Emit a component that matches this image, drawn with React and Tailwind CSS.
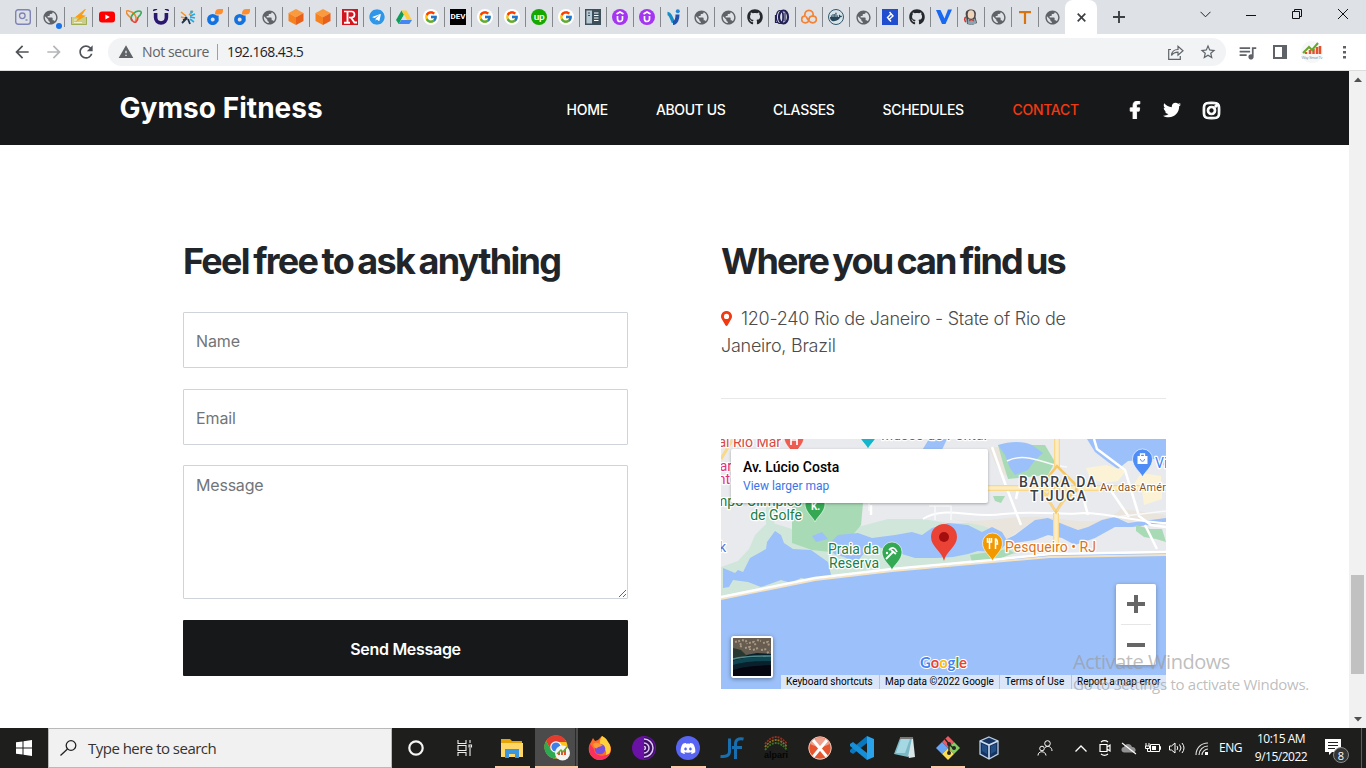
import React from "react";
import { FcGoogle } from "react-icons/fc";
import { FaGithub, FaTelegram, FaFacebookF, FaTwitter, FaInstagram, FaDocker, FaDiscord } from "react-icons/fa";
import { MdPublic, MdArrowBack, MdArrowForward, MdRefresh, MdWarning, MdStarBorder, MdQueueMusic } from "react-icons/md";

const Globe = () => <MdPublic className="h-[17px] w-[17px] text-[#5f6368]" />;
const GoogleTab = () => (
  <span className="flex h-4 w-4 items-center justify-center rounded-full bg-white">
    <FcGoogle className="h-[14px] w-[14px]" />
  </span>
);
const Svg = ({ children, className = "h-4 w-4", box = "0 0 16 16" }) => (
  <svg viewBox={box} className={className} fill="none">{children}</svg>
);
const Finder = () => (
  <Svg>
    <rect x=".7" y=".7" width="14.6" height="14.6" rx="2.5" stroke="#7e84b5" strokeWidth="1.4" />
    <circle cx="7.3" cy="6.8" r="2.8" stroke="#7e84b5" strokeWidth="1.3" />
    <path d="M10.5 11h2" stroke="#7e84b5" strokeWidth="1.4" />
  </Svg>
);
const GlobeDot = () => (
  <span className="relative flex">
    <Globe />
    <span className="absolute -right-[3px] -bottom-[3px] h-[6px] w-[6px] rounded-full bg-[#1a73e8]" />
  </span>
);
const Bolt = () => (
  <Svg>
    <path d="M0 8h16v8H0z" fill="#c9cf8a" />
    <path d="M.5 8v7.500h15V8" stroke="#9fae55" />
    <path d="M3 11h3M3 13.500h8" stroke="#eef0d0" />
    <path d="M14 0 4 8.300l4 .5-4 4.700 11-6.800-4-.7 4-6z" fill="#fb9d0c" />
  </Svg>
);
const Youtube = () => (
  <Svg>
    <rect x="0" y="2.5" width="16" height="11" rx="3" fill="red" />
    <path d="m6.4 5.5 4.4 2.5-4.4 2.5z" fill="#fff" />
  </Svg>
);
const Loop = () => (
  <Svg>
    <path d="M5 9C-1 4-1 1 3 2c5 1 9 6 6 11" stroke="#f18a2b" strokeWidth="1.6" />
    <path d="M6 12c-3-5 3-10 7-10 4 0 2 4-1 6" stroke="#3cab57" strokeWidth="1.6" />
    <path d="M5 9c1 3 3 5 5 4 2-2 2-4 2-5" stroke="#e6403a" strokeWidth="1.6" />
  </Svg>
);
const UMark = () => (
  <Svg>
    <path d="M2.600 4v4.600a5.400 5.400 0 0 0 10.800 0V4" stroke="#2b1670" strokeWidth="3.600" />
    <path d="M0 1.500 4 0M12 0l4 1.500" stroke="#2b1670" strokeWidth="1.600" />
  </Svg>
);
const People = () => (
  <Svg>
    <path d="m1 3 5 4M1 8l4 1M9 6l4-4" stroke="#f7901e" strokeWidth="1.600" />
    <path d="m10 7 5-2M10 8l5 1M10 10l4 3" stroke="#27a9e1" strokeWidth="1.700" />
    <path d="m7 9-5 5M8 10l2 5M6 10l-3 1" stroke="#24324a" strokeWidth="1.800" />
    <circle cx="11.500" cy="3" r="1.400" fill="#27a9e1" /><circle cx="6" cy="9" r="1.500" fill="#24324a" />
  </Svg>
);
const DMark = () => (
  <Svg>
    <circle cx="5.700" cy="10.500" r="3.800" stroke="#1372e0" strokeWidth="3.600" />
    <path d="M8 5.500V4.400c0-3 1.800-4.400 4-4.400h4v1.500c0 3-1.600 4-4 4z" fill="#ff8d2e" />
    <path d="M10.500 6.500v6" stroke="#1372e0" strokeWidth="2.200" />
  </Svg>
);
const Cube = () => (
  <Svg>
    <path d="m8 0 7.500 4L8 8.300.500 4z" fill="#fa9a3e" />
    <path d="M.500 4 8 8.300V16L.500 12z" fill="#f6821f" />
    <path d="M15.500 4 8 8.300V16l7.500-4z" fill="#e8611a" />
  </Svg>
);
const RMark = () => (
  <Svg>
    <path d="M0 0h16v16H0z" fill="#d2151e" />
    <path d="M2 2.500h7.500a3 3 0 0 1 0 6H7" stroke="#fff" strokeWidth="1.700" />
    <path d="M5.500 2v12M2 13.700h6M9 8.500l3.500 5H15" stroke="#fff" strokeWidth="1.900" />
  </Svg>
);
const Drive = () => (
  <Svg>
    <path d="M5.500 1.500 0 11l2.700 4L8 5.500z" fill="#0f9d58" />
    <path d="M5.500 1.500h5L16 11h-5.200z" fill="#ffcd40" />
    <path d="m2.700 15 2.600-4H16l-2.700 4z" fill="#4285f4" />
    <path d="m8 6 2.800 5H5.300z" fill="#dee1e6" />
  </Svg>
);
const Dev = () => (
  <span className="flex h-4 w-4 items-center justify-center bg-black font-['Roboto',sans-serif] text-[8px] leading-none font-bold text-white">DEV</span>
);
const Up = () => (
  <span className="flex h-4 w-4 items-center justify-center rounded-full bg-[#14a800] pb-[2px] font-['Lato',sans-serif] text-[10px] leading-none font-bold tracking-[-0.500px] text-white">up</span>
);
const Book = () => (
  <Svg>
    <path d="M.7.700h14.600v14.600H.7z" fill="#b7c9d3" stroke="#3d4f5a" strokeWidth="1.400" />
    <path d="M7 1h8v14H7z" fill="#3d4f5a" />
    <path d="M9 4h4.500M9 6.500h4.500M9 9h4.500M9 11.500h4.500" stroke="#fff" strokeWidth="1.200" />
    <path d="M3 4h2M3 6.500h2" stroke="#3d4f5a" />
  </Svg>
);
const Udemy = () => (
  <Svg>
    <circle cx="8" cy="8" r="8" fill="#a435f0" />
    <path d="m4.500 5 3.500-2 3.500 2M5.500 7v3a2.500 2.500 0 0 0 5 0V7" stroke="#fff" strokeWidth="1.700" />
  </Svg>
);
const ViMark = () => (
  <Svg>
    <path d="M1.500 4.500c3 0 3.500 4 6 9" stroke="#168ec7" strokeWidth="3.400" />
    <path d="M7 14c3 0 4.500-4 4.500-8.500" stroke="#2150ad" strokeWidth="4" />
    <circle cx="11.800" cy="2.300" r="2" fill="#2586d3" />
  </Svg>
);
const Eclipse = () => (
  <Svg>
    <ellipse cx="9.500" cy="8" rx="4.500" ry="6.500" stroke="#211f55" strokeWidth="2.200" />
    <ellipse cx="5.800" cy="8" rx="3.500" ry="6.500" stroke="#211f55" strokeWidth="1.200" />
    <path d="M9 3.500v9M11 3.500v9M1.500 6v7.500H4" stroke="#211f55" strokeWidth="1.200" />
  </Svg>
);
const CloudTri = () => (
  <Svg>
    <path d="M8 10.500c0 2-1.500 3.300-3.700 3.300a3.500 3.500 0 0 1-.3-7C2.500-.500 13.500-.500 12 6.800a3.500 3.500 0 0 1-.3 7c-2 0-3.200-1-4.700-3L5 7.500M8 10.500c0-2 1.500-3.500 4-3.700" stroke="#f58233" strokeWidth="1.700" />
  </Svg>
);
const DockerTab = () => (
  <span className="flex h-4 w-4 items-center justify-center rounded-full border border-[#33576c] bg-[#d7e4ea]">
    <FaDocker className="h-[12px] w-[12px] text-[#27475a]" />
  </span>
);
const Blue = () => (
  <Svg>
    <path d="M0 0h16v16H0z" fill="#204ecf" />
    <path d="m7.500 3 3.500 4-4.500 4M9 5 5.500 8.500 9 12.500" stroke="#fff" strokeWidth="1.400" />
  </Svg>
);
const VMark = () => (
  <Svg><path d="M0 1h4.500l4 8.500L12 .500h4L9.500 15H6z" fill="#1868f2" /></Svg>
);
const Jenkins = () => (
  <Svg>
    <path d="M3 7C1.500 2 5 0 8.500.500 13 1 13.500 4 12.500 8l1.500 6-5 2-5-1z" fill="#4a4443" />
    <ellipse cx="8" cy="5.500" rx="3.300" ry="4.300" fill="#eed3bd" />
    <path d="M5 9.500 8 11l4-1.500 1.500 5-5 1.500-4-1.500z" fill="#8aa4b3" />
    <path d="m6 10 2 1.300L11 10v2.500L8.500 11.300 6 12.500z" fill="#d33833" />
    <path d="M3 8c-2 1-1.500 4 0 5" stroke="#d33833" strokeWidth="1.600" />
  </Svg>
);
const TMark = () => (
  <Svg><path d="M2 3.200h12M8 3v12" stroke="#d9730d" strokeWidth="2.200" /></Svg>
);
const Telegram = () => (
  <span className="flex h-4 w-4 rounded-full bg-white"><FaTelegram className="h-4 w-4 text-[#2f96e8]" /></span>
);
const Hub = () => <FaGithub className="h-4 w-4 text-[#24292e]" />;

const LEADING_TABS = [Finder, GlobeDot, Bolt, Youtube];
const TABS = [Loop, UMark, People, DMark, DMark, Globe, Cube, Cube, RMark, Telegram, Drive, GoogleTab, Dev, GoogleTab, GoogleTab, Up, GoogleTab, Book, Udemy, Udemy, ViMark, Globe, Globe, Hub, Eclipse, CloudTri, DockerTab, Globe, Blue, Hub, VMark, Jenkins, Globe, TMark];

function TabStrip() {
  return (
    <div className="flex h-[34px] bg-[#dee1e6] pl-[9px] text-[#3c4043]">
      {LEADING_TABS.map((Icon, i) => (
        <div key={i} className="flex h-[34px] w-7 shrink-0 items-center justify-between">
          <span className="flex w-[27px] shrink-0 justify-center"><Icon /></span>
          <span className="h-5 w-px shrink-0 bg-[#85888c]" />
        </div>
      ))}
      {TABS.map((Icon, i) => (
        <div key={i} className="flex h-[34px] w-[27px] shrink-0 items-center">
          <span className="flex w-[26px] shrink-0 justify-center"><Icon /></span>
          <span className="h-5 w-px shrink-0 bg-[#85888c]" />
        </div>
      ))}
      <div className="flex w-[26px] shrink-0 items-center justify-center"><Globe /></div>
      <div className="flex h-[34px] w-8 shrink-0 items-center justify-center rounded-t-lg bg-white">
        <Svg className="h-[9px] w-[9px]" box="0 0 9 9"><path d="m.7.700 7.600 7.600M8.300.700.7 8.300" stroke="#3c4043" strokeWidth="1.700" /></Svg>
      </div>
      <div className="flex w-11 shrink-0 items-center justify-center">
        <Svg className="h-3 w-3" box="0 0 12 12"><path d="M6 0v12M0 6h12" stroke="#3c4043" strokeWidth="1.900" /></Svg>
      </div>
      <div className="ml-auto flex h-7 w-[184px] shrink-0 items-center text-[#111]">
        <span className="flex w-[46px] justify-center"><Svg className="h-[7px] w-[11px]" box="0 0 11 7"><path d="m.5.800 5 5 5-5" stroke="#222" /></Svg></span>
        <span className="flex w-[46px] justify-center"><Svg className="h-[11px] w-[10px]" box="0 0 10 11"><path d="M0 6.500h10" stroke="#111" /></Svg></span>
        <span className="flex w-[46px] justify-center"><Svg className="h-[10px] w-[10px]" box="0 0 10 10"><path d="M.5 2.500h7v7h-7zM2.500 2.500v-2h7v7h-2" stroke="#111" /></Svg></span>
        <span className="flex w-[46px] justify-center"><Svg className="h-[10px] w-[10px]" box="0 0 10 10"><path d="m0 0 10 10M10 0 0 10" stroke="#111" /></Svg></span>
      </div>
    </div>
  );
}

function Toolbar() {
  return (
    <div className="flex h-[37px] items-center border-b border-[#dcdcdc] bg-white text-[#5f6368]">
      <MdArrowBack className="ml-[12px] h-5 w-5 text-[#4f5357]" />
      <MdArrowForward className="ml-[12px] h-5 w-5 text-[#b4b6b9]" />
      <MdRefresh className="ml-[12px] h-5 w-5 text-[#4f5357]" />
      <div className="ml-3 flex h-7 w-[1118px] items-center rounded-full bg-[#f1f3f4] font-['Open_Sans',sans-serif] text-[14px]">
        <MdWarning className="ml-[10px] h-4 w-4" />
        <span className="ml-2 w-[75px] pb-px tracking-[-0.400px] whitespace-nowrap">Not secure</span>
        <span className="h-4 w-px bg-[#9aa0a6]" />
        <span className="ml-[9px] pb-px tracking-[-0.570px] text-[#202124]">192.168.43.5</span>
        <Svg className="ml-auto h-[15px] w-[16px]" box="0 0 16 15">
          <path d="M3 4.500H.700v9.800h11.600V11" stroke="#5f6368" strokeWidth="1.200" />
          <path d="M3.500 10.500c.3-4 2.500-6 6.500-6V1.300l5 4.500-5 4.300V7.200c-3 0-5 1-6.500 3.300z" stroke="#5f6368" strokeWidth="1.200" />
        </Svg>
        <MdStarBorder className="mr-[9px] ml-[15px] h-[18px] w-[18px]" />
      </div>
      <MdQueueMusic className="ml-[11px] h-[21px] w-[21px]" />
      <Svg className="ml-[15px] h-[14px] w-[14px]" box="0 0 14 14"><path d="M0 0h14v14H0zM2 2v10h7V2z" fill="#5f6368" fillRule="evenodd" /></Svg>
      <Svg className="ml-[14px] h-[22px] w-[22px]" box="0 0 22 22">
        <circle cx="11" cy="11" r="11" fill="#f7f7f7" />
        <path d="M5 13v-2M9 13V9M12.500 13V8M16 13V6M19 13V5" stroke="#e6502c" strokeWidth="2.500" />
        <path d="m2 12 6-6 3 3 6-7" stroke="#66a82f" strokeWidth="2" />
        <text x="0.500" y="18" fontSize="4" textLength="21" fill="#7d9cb3" fontFamily="Liberation Sans">Way Smart Tv</text>
      </Svg>
      <Svg className="ml-[19px] h-4 w-[5px]" box="0 0 5 16"><path d="M1 2h3v2.500H1zM1 7h3v2.500H1zM1 12h3v2.500H1z" fill="#5f6368" /></Svg>
    </div>
  );
}

function NavBar() {
  return (
    <header className="flex h-[74px] items-center bg-[#171819] pt-[4px] font-['Inter',sans-serif] text-[14px] font-medium whitespace-nowrap text-white">
      <div className="-mt-[4px] ml-[119.500px] w-[447px] text-[28px] font-bold tracking-[0.050px]">Gymso Fitness</div>
      <a className="-mt-px w-[89.500px] tracking-[-0.250px]">HOME</a>
      <a className="-mt-px w-[117px] tracking-[-0.400px]">ABOUT US</a>
      <a className="-mt-px w-[109.500px] tracking-[-0.300px]">CLASSES</a>
      <a className="-mt-px w-[130px] tracking-[-0.300px]">SCHEDULES</a>
      <a className="-mt-px w-[113px] tracking-[-0.300px] text-[#f13a11]">CONTACT</a>
      <span className="flex w-[18px] justify-center"><FaFacebookF className="h-[18px] w-[18px]" stroke="white" strokeWidth="24" /></span>
      <FaTwitter className="ml-[19px] h-[18px] w-[18px]" />
      <FaInstagram className="ml-[21px] h-[19px] w-[19px]" strokeWidth="32" stroke="white" />
    </header>
  );
}

const MapText = ({ children, ...p }) => (
  <text fontFamily="Roboto, sans-serif" fontSize="14" stroke="#fff" strokeWidth="2.500" strokeLinejoin="round" paintOrder="stroke" {...p}>{children}</text>
);
const Pin = ({ x, y, fill, children }) => (
  <g transform={`translate(${x} ${y})`}>
    <path d="M0 0C-2-5-10-10-10-18a10 10 0 0 1 20 0C10-10 2-5 0 0z" fill={fill} stroke="#fff" strokeWidth=".6" />
    {children}
  </g>
);

function MapDrawing() {
  return (
    <svg viewBox="0 0 445 250" className="block h-[250px] w-[445px]" fill="none">
      <path d="M0 0h445v250H0z" fill="#e8eaed" />
      <path d="M0 128 17 122 28 110 34 96 44 86 52 84 71 90 104 93 137 88 167 80 201 80 227 84 254 84 284 94 292 106 300 114 224 125 171 131 94 140 0 160z" fill="#d0e6da" />
      <path d="M45 66h12l-4 20-8 6z" fill="#cfe7da" />
      <path d="M71 64h71l-2 22-15 18-16 9-18-2-20-7z" fill="#a8dab5" />
      <path d="m249 116 38-6 6 4-20 8-22 1z" fill="#a8dab5" />
      <path d="M268 8h14l6 30-8-4-6-10z" fill="#e9e4dc" />
      <path d="M230 80c30 6 60-4 90-2s60 12 80-8l45 6v4l-38 3-13-5-27 10-10 3-30-12-13 2-30 20-20-14-12-2z" fill="#e9e4dc" />
      <path d="m277 6 47 0 10 17-7 13-40 4-5-16z" fill="#a8dab5" />
      <path d="M277 6c12-4 26-4 34 0l11 8-8 7-7 10-13 5-5-7-5-13z" fill="#9cc0f9" />
      <path d="m107 106 10-10 20-2 14 5 23-3 17-3 10 3 10-7 16-5 20 2 14 7 10-5 10 5 6 10-10 10-20-1-10 3-15 3-17 1-21 0-23-7-21-6-15 18-12-6-10-3z" fill="#9cc0f9" />
      <path d="m54 92 6 4 3 8 9 6 18 1 17 12 3 13-9 3-7 3-14-3-10 5-10-3-20 7-13-5-15-2-4 7-6 1v-20l12 5 3-3 5 2 7-14 16-9 1-7z" fill="#9cc0f9" />
      <path d="m91 97 10-4 6 7-12 3zM284 101l10-5 20-15 13-2 17 7 13 5 10-3 14-7 13-3 13 6 38-5v5l-34 4h-17l-20 11-20 7-13-7-14-3-13 5-20 3z" fill="#9cc0f9" />
      <path d="M366 0h79v28l-11-8-27 2-10 8-10-7-13-10zM200 13 208 0h18l-6 13z" fill="#9cc0f9" />
      <path d="m365 29 20-3 20 6-8 10-14 2-14-5zM420 34l20 3v10l-20 5-7-7zM421 52l20-4v12l-18 6z" fill="#fcf3d7" />
      <path d="m272 57 12 0-4 7-6-2zM415 86l14 4 12 0 4 13-10-3-12-2-8-6z" fill="#a8dab5" />
      <path d="M202 80c20-14 50 0 80-5 40-4 60 2 80-1 26 0 60 10 83 10" stroke="#fff" strokeWidth="2" />
      <path d="m271 8 15 42M286 50l14 36M373 0l3 10 28 21 14 46 12 9 15 2M386 46l22 32M424 86l12 24M150 66v10M362 58l5 18M295 60l2-10" stroke="#fff" strokeWidth="2.500" />
      <path d="M286 22c20-10 40 5 60 6M208 67h22v14M214 67v14M362 45l3 20M148 64v8M445 72l-50 6" stroke="#f8f9fa" strokeWidth="1.500" />
      <path d="M267 49h178M336 0v28M335 74v38" stroke="#f9d88a" strokeWidth="6" />
      <path d="M267 49h178M336 0v28M335 74v38" stroke="#fdecc0" strokeWidth="3.500" />
      <path d="m336 27-16 20 1 4 14 22 6-10 14-11 1-5z" stroke="#f7c765" strokeWidth="2.500" />
      <path d="M327 38l20 22M346 36l-22 22M334 72l-10-18M336 72l12-18" stroke="#f9d58a" strokeWidth="2.200" />
      <path d="M0 20 12 0" stroke="#f9d88a" strokeWidth="3" />
      <path d="m0 158 94-19 77-9 100-9 58-7 116-1v137H0z" fill="#9cc0f9" />
      <path d="m0 160 94-19 77-9 100-9 58-5 116-2" stroke="#f5e4c3" strokeWidth="2" />
      <path d="m0 158 94-19 77-9 100-9 58-6 116-2" stroke="#fff" strokeWidth="2.600" />
      <MapText x="60" y="8" textAnchor="end" fill="#d64a42">Hotal Rio Mar</MapText>
      <MapText x="160" y="1" textLength="106" fill="#118a9e">Museo do Pontal</MapText>
      <MapText x="11" y="32" textAnchor="end" fill="#e52e79">Bar</MapText>
      <MapText x="9" y="45" textAnchor="end" fill="#e52e79">Pont</MapText>
      <MapText x="81" y="67" textAnchor="end" fill="#188048">Campo Olímpico</MapText>
      <MapText x="81" y="81" textAnchor="end" fill="#188048">de Golfe</MapText>
      <MapText x="107" y="115" textLength="51" fill="#188048">Praia da</MapText>
      <MapText x="108" y="129" textLength="50" fill="#188048">Reserva</MapText>
      <MapText x="-2" y="113" fill="#3e7de0">k</MapText>
      <MapText x="298" y="48" textLength="77" fontWeight="500" fill="#3c4043">BARRA DA</MapText>
      <MapText x="309" y="62" textLength="56" fontWeight="500" fill="#3c4043">TIJUCA</MapText>
      <MapText x="379" y="52" fontSize="11" textLength="66" fill="#865325">Av. das Amér</MapText>
      <MapText x="434" y="29" fill="#4285f4">Vi</MapText>
      <MapText x="284" y="113" textLength="91" fill="#db7416">Pesqueiro • RJ</MapText>
      <Pin x="73" y="16" fill="#ef5d52"><path d="M-3-22v12M3-22v12M-3-15h6" stroke="#fff" strokeWidth="1.700" /></Pin>
      <Pin x="147" y="10" fill="#12b5cb" />
      <Pin x="94" y="83" fill="#34a853"><text x="-4" y="-12" fontSize="10" fontFamily="Roboto" fontWeight="700" fill="#fff">K.</text></Pin>
      <Pin x="171" y="131" fill="#34a853"><path d="M-3-20q5-5 8 2M-1-20l5 4M1-18l-7 7" stroke="#fff" strokeWidth="1.800" /><circle cx="-5" cy="-17" r="1.200" fill="#fff" /></Pin>
      <Pin x="271.500" y="122" fill="#f29900"><path d="M-3-23v11M-5-23v4h4v-4M3-12v-10c2 0 2 3 2 5H3" stroke="#fff" strokeWidth="1.500" /></Pin>
      <Pin x="421.500" y="38" fill="#4e8df5"><path d="M-5-21H5v8H-5z" fill="#fff" /><path d="M-2-21v-2h4v2" stroke="#fff" strokeWidth="1.300" /><path d="M-2-18c0 3 4 3 4 0" stroke="#4e8df5" /></Pin>
      <path d="M223 122c-2-10-13-14-13-24a13 13 0 0 1 26 0c0 10-11 14-13 24z" fill="#ea4335" />
      <circle cx="223" cy="98" r="5" fill="#a50e0e" />
      <text x="199" y="229" textLength="47" lengthAdjust="spacingAndGlyphs" fontSize="16" fontWeight="700" fontFamily="Lato, sans-serif" stroke="#fff" strokeWidth="2" strokeLinejoin="round" paintOrder="stroke">
        <tspan fill="#4285f4">G</tspan><tspan fill="#ea4335">o</tspan><tspan fill="#fbbc04">o</tspan><tspan fill="#4285f4">g</tspan><tspan fill="#34a853">l</tspan><tspan fill="#ea4335">e</tspan>
      </text>
    </svg>
  );
}

function Satellite() {
  return (
    <svg viewBox="0 0 38 38" className="block h-[38px] w-[38px]" fill="none">
      <path d="M0 0h38v38H0z" fill="#09202d" />
      <path d="M0 0h38v16L24 15 8 18l-8 2z" fill="#665c50" />
      <path d="M0 10l8 2 6 6-8 3-6 1z" fill="#26382f" />
      <path d="m2 4 4-1 2 4M9 2l4 1 1 3M16 5l5-1 2 4M24 2l4 1M30 5l5-1 1 4M12 10l5-1v3M20 12l5-2M28 12l6-1M7 8l3 1M34 15l3-2" stroke="#a89782" strokeWidth="2" strokeDasharray="2 1.300" />
      <path d="M0 21c10-3 22-3 38-3" stroke="#548a8d" strokeWidth="1.600" />
      <path d="M0 23c10-4 22-4 38-4v4c-16 0-28 1-38 4z" fill="#0e4752" />
      <path d="M0 32c12-4 26-4 38-5v11H0z" fill="#05060f" />
    </svg>
  );
}

function MapPanel() {
  return (
    <div className="relative mt-10 h-[250px] w-[445px] overflow-hidden font-['Roboto',sans-serif]">
      <MapDrawing />
      <div className="absolute top-[10px] left-[10px] h-[54px] w-[257px] rounded-[2px] bg-white pt-[9px] pl-3 shadow-[0_1px_3px_rgba(0,0,0,0.300)]">
        <div className="text-[14px] leading-[19px] font-medium text-black">Av. Lúcio Costa</div>
        <div className="text-[12px] leading-[18px] text-[#3c74e8]">View larger map</div>
      </div>
      <div className="absolute top-[197px] left-[10px] rounded-[3px] border-2 border-white shadow-[0_1px_4px_rgba(0,0,0,0.400)]"><Satellite /></div>
      <div className="absolute top-[145px] left-[395px] flex h-[81px] w-10 flex-col items-center rounded-[2px] bg-white shadow-[0_1px_4px_rgba(0,0,0,0.300)]">
        <span className="flex h-10 items-center"><Svg className="h-[18px] w-[18px]" box="0 0 18 18"><path d="M9 0v18M0 9h18" stroke="#666" strokeWidth="4" /></Svg></span>
        <span className="h-px w-[30px] bg-[#e6e6e6]" />
        <span className="flex h-10 items-center"><Svg className="h-[18px] w-[18px]" box="0 0 18 18"><path d="M0 9h18" stroke="#666" strokeWidth="4" /></Svg></span>
      </div>
      <div className="absolute right-0 bottom-0 flex h-[14px] w-[385px] items-center bg-[#dbe7f9] text-[10px] leading-[14px] whitespace-nowrap text-black">
        <span className="w-[98px] pl-[5px]">Keyboard shortcuts</span>
        <span className="w-[120px] border-l border-[#adc6ec] pl-[5px]">Map data ©2022 Google</span>
        <span className="w-[72px] border-l border-[#adc6ec] pl-[5px]">Terms of Use</span>
        <span className="w-[95px] border-l border-[#adc6ec] pl-[5px]">Report a map error</span>
      </div>
    </div>
  );
}

function Contact() {
  return (
    <main className="flex h-[583px] bg-white pl-[183px] font-['Inter',sans-serif] whitespace-nowrap">
      <form className="w-[445px] pt-[93px]">
        <h2 className="h-[46px] text-[36px] leading-[46px] font-bold tracking-[-1.720px] text-[#212529] [word-spacing:-2.500px]">Feel free to ask anything</h2>
        <input className="mt-[28px] block h-14 w-full rounded-[1px] border border-[#ced4da] px-3 pt-[2px] text-[16px] tracking-[-0.100px] placeholder:text-[#717579]" placeholder="Name" />
        <input className="mt-[21px] block h-14 w-full rounded-[1px] border border-[#ced4da] px-3 pt-[2px] text-[16px] tracking-[-0.100px] placeholder:text-[#717579]" placeholder="Email" />
        <textarea className="mt-[20px] block h-[134px] w-full rounded-[1px] border border-[#ced4da] px-3 pt-[7px] text-[16px] leading-6 tracking-[-0.200px] placeholder:text-[#717579]" placeholder="Message" />
        <button type="button" className="mt-[21px] block h-14 w-full rounded-[1px] bg-[#171819] pt-[2px] text-[16px] font-semibold tracking-[-0.300px] text-white">Send Message</button>
      </form>
      <section className="ml-[93px] w-[445px] pt-[93px]">
        <h2 className="h-[46px] text-[36px] leading-[46px] font-bold tracking-[-1.860px] text-[#212529] [word-spacing:-2.500px]">Where you can find us</h2>
        <div className="mt-[21px] h-[54px] text-[18px] leading-[27px] font-light tracking-[-0.260px] text-[#4c4c4c]">
          <div className="flex items-center">
            <Svg className="mr-[9px] h-[15px] w-[11px]" box="0 0 11 15"><path fillRule="evenodd" d="M5.500 0A5.200 5.200 0 0 0 0 5.300c0 1 .200 1.700.500 2.300l3.900 6.700c.4.900 1.800.900 2.200 0l3.900-6.700c.3-.6.500-1.300.5-2.300A5.200 5.200 0 0 0 5.500 0zm0 2.800a2.600 2.600 0 1 1 0 5.200 2.600 2.600 0 0 1 0-5.200z" fill="#f13a11" /></Svg>
            <span>120-240 Rio de Janeiro - State of Rio de</span>
          </div>
          <div>Janeiro, Brazil</div>
        </div>
        <hr className="mt-[39px] border-[#e8e8e8]" />
        <MapPanel />
      </section>
    </main>
  );
}

function Scrollbar() {
  return (
    <div className="flex h-[657px] w-[17px] shrink-0 flex-col items-center bg-[#f1f1f1]">
      <Svg className="mt-[6px] h-[5px] w-[8px]" box="0 0 8 5"><path d="m0 5 4-4.500L8 5z" fill="#505050" /></Svg>
      <span className="mt-[493px] h-[99px] w-[13px] bg-[#c1c1c1]" />
      <Svg className="mt-auto mb-[6px] h-[5px] w-[8px]" box="0 0 8 5"><path d="m0 0 4 4.500L8 0z" fill="#505050" /></Svg>
    </div>
  );
}

const Explorer = () => (
  <Svg className="h-5 w-[22px]" box="0 0 22 20">
    <path d="M0 1h9l2 2h10v16H0z" fill="#e5a50a" /><path d="M0 5h22v14H0z" fill="#ffd766" />
    <path d="M4 11h14v9h-4v-4H8v4H4z" fill="#3b97dd" />
  </Svg>
);
const Chrome = () => (
  <Svg className="h-7 w-7" box="0 0 28 28">
    <circle cx="13" cy="13" r="11.500" fill="#fcc31e" />
    <path d="M3 7a11.500 11.500 0 0 1 20.500 1H13l-5 8z" fill="#e33b2e" />
    <path d="M3 7a11.500 11.500 0 0 0 9 17.500L17 15l-9 1z" fill="#2da94f" />
    <circle cx="13" cy="13" r="5.800" fill="#fff" /><circle cx="13" cy="13" r="4.600" fill="#3f7fe8" />
    <circle cx="19.500" cy="19" r="7.500" fill="#f4f4f0" />
    <path d="M16 21v-3M19 21v-4M22 21v-6" stroke="#e6502c" strokeWidth="2" /><path d="m14 20 4-4 2 2 4-5" stroke="#66a82f" strokeWidth="1.500" />
  </Svg>
);
const Firefox = () => (
  <Svg className="h-6 w-6" box="0 0 24 24">
    <path d="M3 6 5 2l2 3 3-1 4-4 4 3 4 6c4 8-4 15-10 15C4 24-3 15 3 6z" fill="#ff6b2b" />
    <path d="M14 0c4 2 5 4 6 6 5 6 2 14-4 17 3-5 3-9-1-11-3-2-5-5-1-12z" fill="#ffd13b" />
    <path d="M2 8c-3 9 3 16 10 16 5 0 9-3 10-7-7 5-15 3-16-4z" fill="#fa305e" />
    <circle cx="12" cy="13" r="5.300" fill="#7651dd" /><path d="M5 8c4-3 7 0 10 1-2 1-3 2-5 2-1 2-4 2-5-3z" fill="#ff9a30" />
  </Svg>
);
const Tor = () => (
  <Svg className="h-6 w-6" box="0 0 24 24">
    <circle cx="12" cy="12" r="12" fill="#6912a5" /><path d="M12 1a11 11 0 0 1 0 22z" fill="#3b0e64" />
    <path d="M12 3a9 9 0 0 1 0 18M12 7a5 5 0 0 1 0 10M12 10.500a1.500 1.500 0 0 1 0 3" stroke="#dfc7f2" strokeWidth="1.500" />
  </Svg>
);
const Discord = () => <span className="flex h-6 w-6 items-center justify-center rounded-full bg-[#5865f2]"><FaDiscord className="h-[15px] w-[16px] text-white" /></span>;
const JFlap = () => (
  <Svg className="h-[22px] w-6" box="0 0 24 22"><path d="M9.500 1.500v13c0 4-3 5.500-9 5M15.500 22V7c0-4.500 3-6 8-5M12 10.500h10" stroke="#186fb0" strokeWidth="3" /></Svg>
);
const Alpari = () => (
  <Svg className="h-[26px] w-7" box="0 0 28 26">
    <path d="M3 9Q14-5 25 9" stroke="#98301f" strokeWidth="1.800" strokeDasharray="2 1" />
    <path d="M3 12Q14-2 25 12" stroke="#94701e" strokeWidth="1.800" strokeDasharray="2 1" />
    <path d="M3 15Q14 1 25 15" stroke="#3c7424" strokeWidth="1.800" strokeDasharray="2 1" />
    <text x="2" y="23" fontSize="9" textLength="24" fill="#050505" fontFamily="Liberation Sans" fontWeight="700">alpari</text>
  </Svg>
);
const XBall = () => (
  <Svg className="h-6 w-6" box="0 0 24 24">
    <circle cx="12" cy="12" r="11.500" fill="#e6552e" /><path d="M2 8a11 11 0 0 1 20 0l-10 4z" fill="#f0a08a" />
    <path d="m5 4 14 17M19 4 5 21" stroke="#fff" strokeWidth="3" /><circle cx="12" cy="12" r="11.200" stroke="#dcc4bb" />
  </Svg>
);
const VsCode = () => (
  <Svg className="h-6 w-6" box="0 0 24 24">
    <path d="m17 0 7 3v18l-7 3z" fill="#2ba3ea" /><path d="M17 0v7L3 18l-3-2v-2z" fill="#0a78be" />
    <path d="M17 24v-7L3 6 0 8v2z" fill="#1590d8" />
  </Svg>
);
const Notepad = () => (
  <Svg className="h-6 w-6" box="0 0 24 24">
    <path d="M8 2h13l2 19-6 1z" fill="#d8e6e8" /><path d="M8 2h12l-4 19-14-3z" fill="#7bb9c7" /><path d="M9 3h9l-5 14-9 0z" fill="#a5d8e2" />
    <path d="M8 2h13" stroke="#777" strokeWidth="2" />
  </Svg>
);
const GitIcon = () => (
  <Svg className="h-6 w-6" box="0 0 24 24">
    <path d="m12 0 6 6-6 6-6-6z" fill="#eb5b61" /><path d="m18 6 6 6-6 6-6-6z" fill="#84cc61" /><path d="m6 6 6 6-6 6-6-6z" fill="#6aa4f5" /><path d="m12 12 6 6-6 6-6-6z" fill="#fbdc55" />
    <path d="m9 3 4 5v9M13 8l5 5" stroke="#252525" strokeWidth="1.400" /><circle cx="13" cy="8" r="2" fill="#252525" /><circle cx="13" cy="17" r="2" fill="#252525" /><circle cx="18" cy="12" r="2" fill="#252525" />
  </Svg>
);
const VBox = () => (
  <Svg className="h-6 w-6" box="0 0 24 24">
    <path d="m12 1 9 4v13l-9 5-9-5V5z" fill="#16335f" stroke="#b9cee8" strokeWidth="1.300" />
    <path d="m3 5 9 4 9-4M12 9v14" stroke="#cfdef0" strokeWidth="1.600" /><path d="m5 8 5 2v8l-5-3zM19 8l-5 2v8l5-3z" fill="#244e86" />
  </Svg>
);

const TaskItem = ({ children, className = "w-11", bar }) => (
  <div className={"relative flex h-10 shrink-0 items-center justify-center " + className}>
    {children}
    {bar && <span className={"absolute bottom-0 h-[2px] bg-[#fcc9a6] " + bar} />}
  </div>
);

function Taskbar() {
  return (
    <footer className="flex h-10 items-center overflow-hidden bg-[#1e1e1d] font-['Open_Sans',sans-serif] text-[12px] text-white">
      <TaskItem className="w-12"><Svg className="h-4 w-4"><path d="m0 2.300 6.500-.900v6.100H0zM7.500 1.200 16 0v7.500H7.500zM0 8.500h6.500v6.100L0 13.700zM7.500 8.500H16V16l-8.500-1.200z" fill="#fff" /></Svg></TaskItem>
      <div className="flex h-10 w-[344px] shrink-0 items-center border border-[#b9b9b9] bg-[#f1f1f1] text-[#333]">
        <Svg className="ml-[11px] h-4 w-[17px]" box="0 0 17 16"><circle cx="11" cy="5.500" r="4.800" stroke="#222" strokeWidth="1.300" /><path d="M7.500 9 .500 15.500" stroke="#222" strokeWidth="1.300" /></Svg>
        <span className="ml-[11px] text-[15px] tracking-[-0.520px] whitespace-nowrap">Type here to search</span>
      </div>
      <TaskItem className="w-12"><Svg><circle cx="8" cy="8" r="6.700" stroke="#f5f5f5" strokeWidth="2.200" /></Svg></TaskItem>
      <TaskItem className="w-[49px]"><Svg><path d="M1 0v3.500h8V0M1 16v-3.500h8V16M1 5.500h8v5H1zM13 0v3M13 8v8M12 5h2.500v2H12z" stroke="#eee" strokeWidth="1.100" /></Svg></TaskItem>
      <TaskItem className="w-[46px]" bar="left-[6px] w-[35px]"><Explorer /></TaskItem>
      <TaskItem className="w-[43px] bg-[#4b4b4b]" bar="left-0 w-[43px]"><Chrome /><span className="absolute top-0 right-[2px] h-10 w-px bg-[#2a2a2a]" /></TaskItem>
      <TaskItem><Firefox /></TaskItem>
      <TaskItem><Tor /></TaskItem>
      <TaskItem bar="left-[5px] w-[35px]"><Discord /></TaskItem>
      <TaskItem><JFlap /></TaskItem>
      <TaskItem><Alpari /></TaskItem>
      <TaskItem className="w-[43px]"><XBall /></TaskItem>
      <TaskItem className="w-[41px]"><VsCode /></TaskItem>
      <TaskItem><Notepad /></TaskItem>
      <TaskItem className="w-[43px]" bar="left-[5px] w-[34px]"><GitIcon /></TaskItem>
      <TaskItem className="w-10"><VBox /></TaskItem>
      <TaskItem className="ml-[18px] w-9"><Svg><circle cx="10.500" cy="3.500" r="2.800" stroke="#fff" /><circle cx="5" cy="8.500" r="2.300" stroke="#fff" /><path d="M1 15.500c0-5 7.500-5 8 0M8 7.500c3-2.500 7-.500 7 3.500" stroke="#fff" /></Svg></TaskItem>
      <TaskItem className="ml-[6px] w-6"><Svg className="h-[7px] w-3" box="0 0 12 7"><path d="m.5 6.500 5.500-5.500 5.500 5.500" stroke="#fff" strokeWidth="1.300" /></Svg></TaskItem>
      <TaskItem className="w-6"><Svg><path d="M3 4.500h7v7H3zM10 7l3-2v6l-3-2M4 2c2-1.500 5-1.500 7 0M4 14c2 1.500 5 1.500 7 0" stroke="#fff" strokeWidth="1.200" /></Svg></TaskItem>
      <TaskItem className="w-6"><Svg className="h-4 w-4"><path d="M3.500 12.500C-1 12 0 7 3 7c1-4 7-4 8 0 4-.5 5 5 1.500 5.500z" fill="#929292" /><path d="m1 3 14 11" stroke="#fff" strokeWidth="1.100" /></Svg></TaskItem>
      <TaskItem className="w-6"><Svg className="h-4 w-4"><path d="M5.500 4.500h9v7h-9zM14.500 6.500h1v3h-1M1 3v3M4 3v3M.500 6h4v2.500h-4zM2.500 8.500v3h3" stroke="#fff" /><path d="M7 6h4v4H7z" fill="#fff" /></Svg></TaskItem>
      <TaskItem className="w-6"><Svg className="h-4 w-4"><path d="M.500 6h2L6 3v10l-3.500-3h-2zM8 6q1.500 2 0 4M10.500 4.500q3 3.500 0 7M13 3q4 5 0 10" stroke="#fff" /></Svg></TaskItem>
      <TaskItem className="w-[26px]"><Svg className="h-4 w-4"><path d="M2 15C2 8 7 3 14 3M5 15c0-5 4-9 9-9M8 15c0-3 3-6 6-6" stroke="#ddd" strokeWidth="1.200" /><path d="M11 12h3v3h-3z" fill="#fff" /></Svg></TaskItem>
      <TaskItem className="w-[31px] tracking-[-0.500px]">ENG</TaskItem>
      <div className="flex w-[70px] shrink-0 flex-col items-center leading-[18px] tracking-[-0.500px] whitespace-nowrap"><span>10:15 AM</span><span>9/15/2022</span></div>
      <TaskItem className="w-[42px]">
        <Svg className="mr-[8px] mb-[2px] h-4 w-4"><path d="M0 0h16v13H7l-3 3v-3H0z" fill="#fff" /><path d="M3 3.500h10M3 6.500h10M3 9.500h7" stroke="#222" /></Svg>
        <span className="absolute top-[19px] left-[17px] flex h-4 w-4 items-center justify-center rounded-full border border-[#8b8b8b] bg-[#343434] text-[11px] leading-none">8</span>
      </TaskItem>
      <span className="ml-[3px] h-10 w-px bg-[#5d5d5d]" />
    </footer>
  );
}

export default function App() {
  return (
    <div className="relative h-[768px] w-[1366px] overflow-hidden bg-white">
      <TabStrip />
      <Toolbar />
      <div className="flex h-[657px]">
        <div className="w-[1349px] shrink-0"><NavBar /><Contact /></div>
        <Scrollbar />
      </div>
      <Taskbar />
      <div className="pointer-events-none absolute top-[649px] left-[1073px] font-['Open_Sans',sans-serif] whitespace-nowrap text-[#999]/65">
        <div className="text-[20px] leading-[26px] tracking-[-0.450px]">Activate Windows</div>
        <div className="-mt-px text-[15px] leading-5 tracking-[-0.280px]">Go to Settings to activate Windows.</div>
      </div>
    </div>
  );
}
